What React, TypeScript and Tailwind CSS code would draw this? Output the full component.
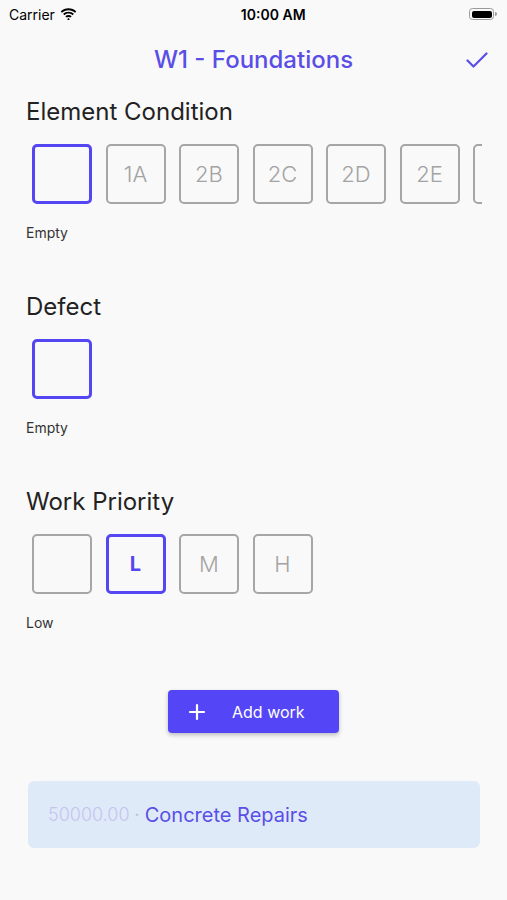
import React from "react";

const PURPLE = "#5a4ee6";

interface OptionBoxProps {
  label?: string;
  selected?: boolean;
}

function OptionBox({ label, selected }: OptionBoxProps) {
  return (
    <div
      className={
        selected
          ? "w-[60px] h-[60px] shrink-0 rounded-[5px] border-[3px] border-[#5546f4] flex items-center justify-center text-[20px] font-bold text-[#5546f4]"
          : "w-[60px] h-[60px] shrink-0 rounded-[5px] border-2 border-[#a6a6a6] flex items-center justify-center text-[22px] font-light text-[#a3a3a3]"
      }
    >
      {label}
    </div>
  );
}

function Section({
  title,
  options,
  selected,
  caption,
  first,
}: {
  title: string;
  options: string[];
  selected: number;
  caption: string;
  first?: boolean;
}) {
  return (
    <div className={first ? "pl-[26px]" : "pl-[26px] mt-[48px]"}>
      <h2 className="pt-[2px] text-[24px] leading-[28px] text-[#222]">{title}</h2>
      {/* 선택 박스 목록 */}
      <div className="mt-[18px] w-[456px] overflow-hidden">
        <div className="flex gap-[13.5px] pl-[6px]">
          {options.map((o, i) => (
            <OptionBox key={i} label={o} selected={i === selected} />
          ))}
        </div>
      </div>
      <p className="mt-[19px] text-[14px] leading-[20px] text-[#333]">{caption}</p>
    </div>
  );
}

export default function App() {
  return (
    <div
      className="w-[507px] h-[900px] bg-[#f9f9f9] overflow-hidden"
      style={{ fontFamily: "Inter, 'Noto Sans', sans-serif" }}
    >
      {/* 상태 표시줄 */}
      <div className="h-[28px] flex items-center justify-between px-[9px] text-[14px] text-black">
        <div className="flex items-center gap-[5px]">
          <span>Carrier</span>
          <svg width="17" height="12" viewBox="0 0 17 12">
            <path d="M8.5 2.2c2.5 0 4.8 1 6.5 2.6l1.3-1.4C14.2 1.4 11.5.2 8.5.2S2.8 1.4.7 3.4L2 4.8c1.7-1.6 4-2.6 6.5-2.6z" fill="#000" />
            <path d="M8.5 5.6c1.6 0 3 .6 4.1 1.6l1.3-1.4C12.5 4.5 10.6 3.7 8.5 3.7s-4 .8-5.4 2.1l1.3 1.4c1.1-1 2.5-1.6 4.1-1.6z" fill="#000" />
            <path d="M8.5 8.9c.7 0 1.4.3 1.9.7l1.3-1.4c-.9-.8-2-1.2-3.2-1.2s-2.3.4-3.2 1.2l1.3 1.4c.5-.4 1.2-.7 1.9-.7z" fill="#000" />
            <path d="M8.5 9.9l1.3 1.3-1.3 1.3-1.3-1.3z" fill="#000" />
          </svg>
        </div>
        <span className="font-semibold">10:00 AM</span>
        <div className="flex items-center mr-[1px]">
          <div className="w-[25px] h-[12px] rounded-[3.5px] border border-[#9a9a9a] p-[1.5px]">
            <div className="w-full h-full bg-black rounded-[2px]" />
          </div>
          <div className="w-[1.5px] h-[4px] bg-[#9a9a9a] rounded-r-sm ml-[1px]" />
        </div>
      </div>

      {/* 헤더 */}
      <div className="relative h-[64px] flex items-center justify-center">
        <h1 className="text-[24px] font-medium" style={{ color: PURPLE }}>
          W1 - Foundations
        </h1>
        <svg
          className="absolute right-[19px] top-[24px]"
          width="22"
          height="16"
          viewBox="0 0 22 16"
          fill="none"
          stroke={PURPLE}
          strokeWidth="2.2"
          strokeLinecap="round"
          strokeLinejoin="round"
        >
          <path d="M1.5 8.5l6 6 13-13" />
        </svg>
      </div>

      <div className="pt-[4px]">
        <Section
          first
          title="Element Condition"
          options={["", "1A", "2B", "2C", "2D", "2E", ""]}
          selected={0}
          caption="Empty"
        />
        <Section title="Defect" options={[""]} selected={0} caption="Empty" />
        <Section
          title="Work Priority"
          options={["", "L", "M", "H"]}
          selected={1}
          caption="Low"
        />
      </div>

      {/* 작업 추가 버튼 */}
      <div className="mt-[57px] flex justify-center">
        <button className="w-[171px] h-[43px] rounded-[4px] bg-[#5446f6] text-white text-[16px] flex items-center shadow-[0_2px_4px_rgba(0,0,0,0.25)]">
          <svg className="ml-[20px]" width="18" height="18" viewBox="0 0 18 18" stroke="#fff" strokeWidth="2.2" strokeLinecap="round">
            <path d="M9 2v14M2 9h14" />
          </svg>
          <span className="ml-[26px]">Add work</span>
        </button>
      </div>

      {/* 작업 카드 */}
      <div className="mt-[48px] ml-[28px] w-[452px] h-[67px] rounded-[6px] bg-[#dfeaf8] flex items-center pl-[20px]">
        <span className="text-[18px] text-[#c5c4f1] font-light">50000.00</span>
        <span className="text-[18px] text-[#c0c0d0] mx-[5px]">·</span>
        <span className="text-[20px]" style={{ color: PURPLE }}>
          Concrete Repairs
        </span>
      </div>
    </div>
  );
}
